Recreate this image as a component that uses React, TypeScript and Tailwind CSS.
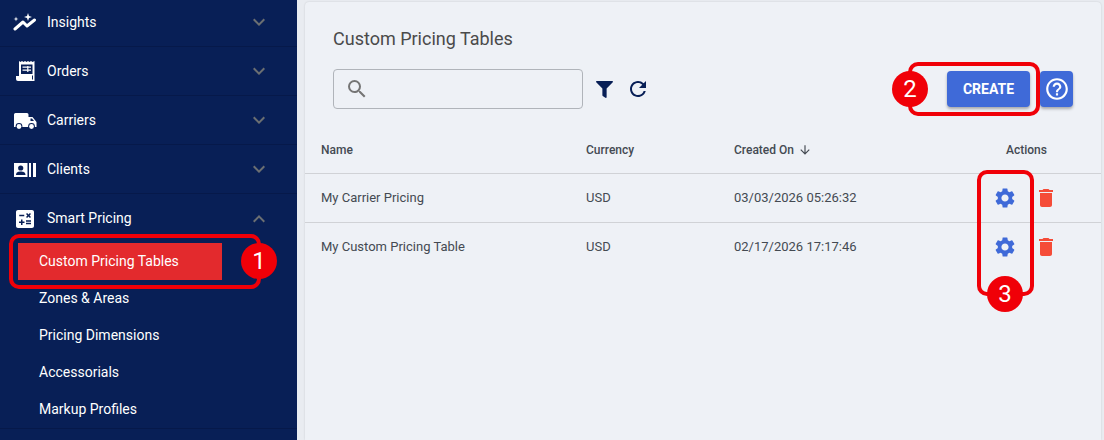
import React, { FC, ReactNode } from 'react';
import {
  MdCalculate,
  MdExpandMore,
  MdExpandLess,
  MdSearch,
  MdRefresh,
  MdHelpOutline,
  MdArrowDownward,
  MdSettings,
  MdDelete,
} from 'react-icons/md';
import { FaFilter } from 'react-icons/fa';

const navy = '#081f56';

const InsightsIcon = () => (
  <svg viewBox="0 0 24 24" className="w-[24px] h-[24px]" fill="white">
    <path d="M2 19 L10 12 L14 16 L21.5 10" fill="none" stroke="white" strokeWidth="3" strokeLinecap="round" strokeLinejoin="round" />
    <path d="M3 6.5 L3.6 8.4 L5.5 9 L3.6 9.6 L3 11.5 L2.4 9.6 L.5 9 L2.4 8.4 Z" />
    <path d="M15 3 L16 6 L19 7 L16 8 L15 11 L14 8 L11 7 L14 6 Z" />
  </svg>
);

const OrdersIcon = () => (
  <svg viewBox="0 0 24 24" className="w-[24px] h-[24px]">
    <path fill="white" d="M6 2 L7.5 3 L9 2 L10.5 3 L12 2 L13.5 3 L15 2 L16.5 3 L18 2 L19.5 3 L21.5 2 V22 H5 A2 2 0 0 1 3 20 V17 H6 Z" />
    <rect x="8" y="5.5" width="11.5" height="9.5" fill={navy} />
    <path fill="white" d="M9.5 7.5 H18 V8.7 H9.5 Z M9.5 10.5 H18 V11.7 H9.5 Z M14.2 7 H15.4 V13 H14.2 Z" />
    <rect x="19" y="16.5" width="1" height="4" fill={navy} />
  </svg>
);

const TruckIcon = () => (
  <svg viewBox="0 0 24 24" className="w-[24px] h-[24px]">
    <path fill="white" d="M2.5 5 H14 A1.5 1.5 0 0 1 15.5 6.5 V9 H19.5 L23.5 14 V19 H1 V6.5 A1.5 1.5 0 0 1 2.5 5 Z" />
    <path fill={navy} d="M17.5 10.5 H19 L21 13 H17.5 Z" />
    <circle cx="6" cy="18.5" r="3.4" fill={navy} />
    <circle cx="6" cy="18.5" r="2.4" fill="white" />
    <circle cx="18.5" cy="18.5" r="3.4" fill={navy} />
    <circle cx="18.5" cy="18.5" r="2.4" fill="white" />
  </svg>
);

const ClientsIcon = () => (
  <svg viewBox="0 0 24 24" className="w-[24px] h-[24px]">
    <rect x="1" y="6" width="13.5" height="14" fill="white" />
    <rect x="16" y="6" width="2" height="14" fill="white" />
    <rect x="20" y="6" width="3" height="14" fill="white" />
    <circle cx="7.7" cy="11" r="2.6" fill={navy} />
    <path fill={navy} d="M3 18 C3 15 5.5 14.5 7.7 14.5 C10 14.5 12.5 15 12.5 18 Z" />
  </svg>
);

const NavRow: FC<{ icon: ReactNode; label: string; open?: boolean }> = ({ icon, label, open }) => (
  <div className={`h-[49px] flex items-center pl-[13px] pr-[26px] ${open ? '' : 'border-b border-[#06194a]'}`}>
    <span className="w-[24px] h-[24px] flex items-center justify-center text-white text-[26px]">{icon}</span>
    <span className="ml-[10px] text-[14px] font-normal text-white flex-1">{label}</span>
    <span className="text-[24px] text-[#6b6f72]">{open ? <MdExpandLess /> : <MdExpandMore />}</span>
  </div>
);

const SubItem: FC<{ label: string; active?: boolean }> = ({ label, active }) => (
  <div className={`h-[37px] ml-[18px] flex items-center pl-[21px] text-[14px] font-normal text-white ${active ? 'bg-[#e32a2d] w-[204px]' : ''}`}>
    {label}
  </div>
);

const Row: FC<{ name: string; date: string }> = ({ name, date }) => (
  <div className="h-[49px] flex items-center border-t border-[#d0d2d6] text-[13px] text-[#444a52]">
    <span className="w-[281px] pl-[16px]">{name}</span>
    <span className="w-[148px]">USD</span>
    <span className="w-[259px]">{date}</span>
    <span className="text-[24px] text-[#3f6ad8]"><MdSettings /></span>
    <span className="text-[24px] text-[#f54c38] ml-[17px]"><MdDelete /></span>
  </div>
);

const Badge: FC<{ n: number; className: string }> = ({ n, className }) => (
  <div className={`absolute w-[36px] h-[36px] rounded-full bg-[#f00008] text-white text-[24px] leading-none flex items-center justify-center ${className}`}>
    {n}
  </div>
);

const App: FC = () => {
  return (
    <div className="relative w-[1104px] h-[440px] overflow-hidden bg-[#e9ecf1] flex font-['Roboto',sans-serif]">
      <aside className="w-[297px] h-[442px] bg-[#081f56] shrink-0 -mt-[2px]">
        <NavRow icon={<InsightsIcon />} label="Insights" />
        <NavRow icon={<OrdersIcon />} label="Orders" />
        <NavRow icon={<TruckIcon />} label="Carriers" />
        <NavRow icon={<ClientsIcon />} label="Clients" />
        <NavRow icon={<MdCalculate />} label="Smart Pricing" open />
        <div className="border-b border-[#06194a]">
          <SubItem label="Custom Pricing Tables" active />
          <SubItem label="Zones & Areas" />
          <SubItem label="Pricing Dimensions" />
          <SubItem label="Accessorials" />
          <SubItem label="Markup Profiles" />
        </div>
      </aside>

      <main className="ml-[8px] mt-[2px] w-[796px] h-[438px] bg-[#eef1f6] rounded-t-[4px] shadow-[0_0_2px_rgba(0,0,0,0.15)]">
        <h1 className="pl-[28px] pt-[25px] text-[18px] leading-[24px] text-[#4a4a4a]">Custom Pricing Tables</h1>
        <div className="flex items-center pl-[28px] pr-[28px] mt-[18px]">
          <div className="w-[250px] h-[40px] border border-[#b0b4ba] rounded-[4px] flex items-center pl-[11px] text-[24px] text-[#757575]">
            <MdSearch />
          </div>
          <FaFilter className="ml-[13px] text-[17px] text-[#081f56]" />
          <MdRefresh className="ml-[13px] text-[24px] text-[#081f56]" />
          <button className="ml-auto w-[83px] h-[36px] rounded-[4px] bg-[#3f6ad8] text-white text-[14px] font-bold shadow-[0_2px_3px_rgba(0,0,0,0.3)]">
            CREATE
          </button>
          <button className="ml-[10px] w-[33px] h-[36px] rounded-[4px] bg-[#3f6ad8] text-white text-[26px] flex items-center justify-center shadow-[0_2px_3px_rgba(0,0,0,0.3)]">
            <MdHelpOutline />
          </button>
        </div>
        <div className="mt-[18px] h-[46px] flex items-center text-[12px] font-medium text-[#444a52] pb-[1px]">
          <span className="w-[281px] pl-[16px]">Name</span>
          <span className="w-[148px]">Currency</span>
          <span className="w-[272px] flex items-center gap-[4px]">
            Created On <MdArrowDownward className="text-[14px]" />
          </span>
          <span>Actions</span>
        </div>
        <Row name="My Carrier Pricing" date="03/03/2026 05:26:32" />
        <Row name="My Custom Pricing Table" date="02/17/2026 17:17:46" />
      </main>

      {/* annotation callouts drawn over the page */}
      <div className="absolute left-[9px] top-[234px] w-[252px] h-[55px] border-[4px] border-[#f00008] rounded-[10px]" />
      <Badge n={1} className="left-[241px] top-[243px]" />
      <div className="absolute left-[908px] top-[62px] w-[132px] h-[54px] border-[4px] border-[#f00008] rounded-[10px]" />
      <Badge n={2} className="left-[892px] top-[71px]" />
      <div className="absolute left-[977px] top-[170px] w-[57px] h-[126px] border-[4px] border-[#f00008] rounded-[10px]" />
      <Badge n={3} className="left-[987px] top-[276px]" />
    </div>
  );
};

export default App;
